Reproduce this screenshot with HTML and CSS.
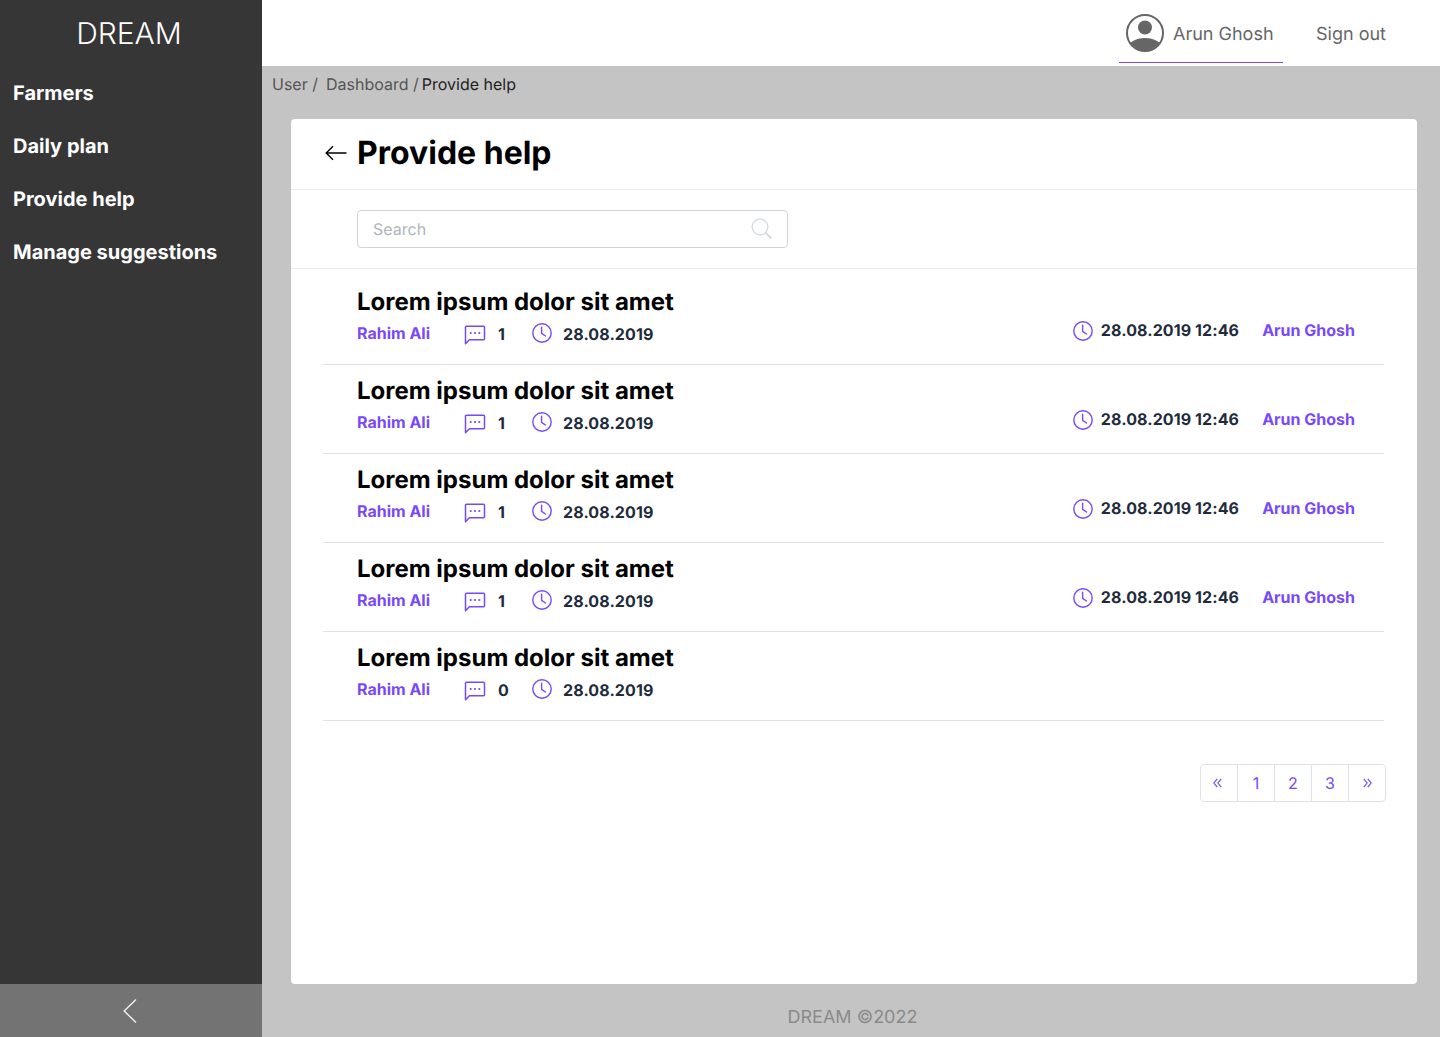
FILE: index.html
```html
<!DOCTYPE html>
<html lang="en">

<head>
  <meta charset="UTF-8">
  <meta name="viewport" content="width=device-width, initial-scale=1.0">
  <title>Provide help</title>
  <link rel="stylesheet" href="styles.css">
</head>

<body>
  <svg class="icon-defs" width="0" height="0">
    <symbol id="icon-chat" viewBox="0 0 22 20">
      <path d="M1.500 18.700V2.200a1 1 0 0 1 1-1h17a1 1 0 0 1 1 1v11.600a1 1 0 0 1-1 1H5.400z" fill="none" stroke="currentColor" stroke-width="1.500" stroke-linejoin="round" />
      <circle cx="6.700" cy="8" r="1.100" fill="currentColor" />
      <circle cx="11" cy="8" r="1.100" fill="currentColor" />
      <circle cx="15.300" cy="8" r="1.100" fill="currentColor" />
    </symbol>
    <symbol id="icon-clock" viewBox="0 0 20 20">
      <circle cx="10" cy="10" r="9.200" fill="none" stroke="currentColor" stroke-width="1.400" />
      <path d="M9.600 4.300v6l3.900 2.700" fill="none" stroke="currentColor" stroke-width="1.400" stroke-linecap="round" stroke-linejoin="round" />
    </symbol>
  </svg>

  <div class="layout">
    <aside class="sidebar">
      <div class="logo">DREAM</div>
      <nav class="side-nav">
        <a class="side-link">Farmers</a>
        <a class="side-link">Daily plan</a>
        <a class="side-link">Provide help</a>
        <a class="side-link">Manage suggestions</a>
      </nav>
      <div class="collapse">
        <svg width="16" height="26" viewBox="0 0 16 26">
          <path d="M14 1.500L2.200 13 14 24.500" fill="none" stroke="#f1f1f1" stroke-width="1.400" />
        </svg>
      </div>
    </aside>

    <div class="main">
      <header class="topbar">
        <div class="user">
          <svg class="avatar" width="38" height="38" viewBox="0 0 38 38">
            <defs>
              <clipPath id="avatar-clip">
                <circle cx="19" cy="19" r="17.500" />
              </clipPath>
            </defs>
            <circle cx="19" cy="19" r="18" fill="none" stroke="#666" stroke-width="2" />
            <circle cx="19" cy="13.500" r="7" fill="#666" />
            <ellipse cx="19" cy="34" rx="17" ry="10" fill="#666" clip-path="url(#avatar-clip)" />
          </svg>
          <span>Arun Ghosh</span>
        </div>
        <a class="signout">Sign out</a>
      </header>

      <div class="breadcrumb">
        <span>User /</span>
        <span class="crumb-mid">Dashboard /</span>
        <span class="crumb-current">Provide help</span>
      </div>

      <section class="card">
        <div class="card-head">
          <svg width="22" height="16" viewBox="0 0 22 16">
            <path d="M21.500 8H1.200M8 1.200L1.200 8 8 14.800" fill="none" stroke="#000" stroke-width="1.400" />
          </svg>
          <h1>Provide help</h1>
        </div>

        <div class="search-row">
          <div class="search">
            <span>Search</span>
            <svg width="22" height="22" viewBox="0 0 22 22">
              <circle cx="9" cy="9" r="7.900" fill="none" stroke="#d3d8e0" stroke-width="1.200" />
              <path d="M14.800 14.800L20.600 20.600" fill="none" stroke="#d3d8e0" stroke-width="1.800" />
            </svg>
          </div>
        </div>

        <div class="list">
          <div class="item">
            <div class="item-left">
              <h2>Lorem ipsum dolor sit amet</h2>
              <div class="meta">
                <a class="author">Rahim Ali</a>
                <svg class="chat"><use href="#icon-chat" /></svg>
                <span class="count">1</span>
                <svg class="clock"><use href="#icon-clock" /></svg>
                <span class="date">28.08.2019</span>
              </div>
            </div>
            <div class="item-right">
              <svg class="clock"><use href="#icon-clock" /></svg>
              <span class="date">28.08.2019 12:46</span>
              <a class="author">Arun Ghosh</a>
            </div>
          </div>

          <div class="item">
            <div class="item-left">
              <h2>Lorem ipsum dolor sit amet</h2>
              <div class="meta">
                <a class="author">Rahim Ali</a>
                <svg class="chat"><use href="#icon-chat" /></svg>
                <span class="count">1</span>
                <svg class="clock"><use href="#icon-clock" /></svg>
                <span class="date">28.08.2019</span>
              </div>
            </div>
            <div class="item-right">
              <svg class="clock"><use href="#icon-clock" /></svg>
              <span class="date">28.08.2019 12:46</span>
              <a class="author">Arun Ghosh</a>
            </div>
          </div>

          <div class="item">
            <div class="item-left">
              <h2>Lorem ipsum dolor sit amet</h2>
              <div class="meta">
                <a class="author">Rahim Ali</a>
                <svg class="chat"><use href="#icon-chat" /></svg>
                <span class="count">1</span>
                <svg class="clock"><use href="#icon-clock" /></svg>
                <span class="date">28.08.2019</span>
              </div>
            </div>
            <div class="item-right">
              <svg class="clock"><use href="#icon-clock" /></svg>
              <span class="date">28.08.2019 12:46</span>
              <a class="author">Arun Ghosh</a>
            </div>
          </div>

          <div class="item">
            <div class="item-left">
              <h2>Lorem ipsum dolor sit amet</h2>
              <div class="meta">
                <a class="author">Rahim Ali</a>
                <svg class="chat"><use href="#icon-chat" /></svg>
                <span class="count">1</span>
                <svg class="clock"><use href="#icon-clock" /></svg>
                <span class="date">28.08.2019</span>
              </div>
            </div>
            <div class="item-right">
              <svg class="clock"><use href="#icon-clock" /></svg>
              <span class="date">28.08.2019 12:46</span>
              <a class="author">Arun Ghosh</a>
            </div>
          </div>

          <div class="item">
            <div class="item-left">
              <h2>Lorem ipsum dolor sit amet</h2>
              <div class="meta">
                <a class="author">Rahim Ali</a>
                <svg class="chat"><use href="#icon-chat" /></svg>
                <span class="count">0</span>
                <svg class="clock"><use href="#icon-clock" /></svg>
                <span class="date">28.08.2019</span>
              </div>
            </div>
          </div>
        </div>

        <div class="pagination">
          <a class="page-link page-prev">
            <svg width="9" height="10" viewBox="0 0 9 10">
              <path d="M4.200 .8L.9 5l3.300 4.200M8.200 .8L4.900 5l3.300 4.200" fill="none" stroke="currentColor" stroke-width="1.200" />
            </svg>
          </a>
          <a class="page-link">1</a>
          <a class="page-link">2</a>
          <a class="page-link">3</a>
          <a class="page-link">
            <svg width="9" height="10" viewBox="0 0 9 10">
              <path d="M.8 .8L4.100 5 .8 9.200M4.800 .8L8.100 5 4.800 9.200" fill="none" stroke="currentColor" stroke-width="1.200" />
            </svg>
          </a>
        </div>
      </section>

      <footer class="footer">DREAM ©2022</footer>
    </div>
  </div>
</body>

</html>
```

FILE: styles.css
```css
* {
  box-sizing: border-box;
}

body {
  margin: 0;
  background-color: #c4c4c4;
  font-family: Inter, "Liberation Sans", sans-serif;
  color: #000;
  text-rendering: geometricPrecision;
}

.icon-defs {
  display: block;
  height: 0;
}

.layout {
  display: flex;
  height: 1037px;
  overflow: hidden;
}

/* Sidebar */
.sidebar {
  display: flex;
  flex-direction: column;
  width: 262px;
  flex-shrink: 0;
  background-color: #363636;
  color: white;
}

.logo {
  height: 66px;
  padding: 1px 4px 0 0;
  font-size: 30px;
  font-weight: 300;
  line-height: 66px;
  text-align: center;
}

.side-nav {
  display: flex;
  flex-direction: column;
  flex: 1;
}

.side-link {
  height: 53px;
  padding: 1px 0 0 13px;
  font-size: 20px;
  font-weight: 700;
  line-height: 53px;
}

.collapse {
  display: flex;
  align-items: center;
  justify-content: center;
  height: 53px;
  padding-right: 2px;
  background-color: #737373;
}

/* Main column */
.main {
  display: flex;
  flex-direction: column;
  flex: 1;
}

.topbar {
  display: flex;
  justify-content: flex-end;
  height: 66px;
  background-color: white;
  color: #666;
  font-size: 18px;
}

.user {
  display: flex;
  align-items: center;
  gap: 9px;
  width: 164px;
  height: 63px;
  padding: 4px 0 0 7px;
  border-bottom: 1px solid #7749f8;
}

.user span {
  margin-top: 3px;
}

.signout {
  width: 157px;
  padding: 24px 0 0 33px;
}

.breadcrumb {
  display: flex;
  height: 53px;
  padding: 8px 0 0 10px;
  color: #555;
  font-size: 16px;
  line-height: 21px;
}

.crumb-mid {
  margin-left: 8px;
}

.crumb-current {
  margin-left: 3px;
  color: #222;
}

.card {
  display: flex;
  flex-direction: column;
  height: 865px;
  margin: 0 23px 0 29px;
  background-color: white;
  border-radius: 4px;
}

.card-head {
  display: flex;
  align-items: center;
  gap: 10px;
  height: 71px;
  padding: 0 0 2px 34px;
  border-bottom: 1px solid #e9ecef;
}

h1 {
  margin: 0;
  font-size: 32px;
  font-weight: 700;
  line-height: 68px;
}

.search-row {
  height: 79px;
  padding: 20px 0 0 66px;
  border-bottom: 1px solid #e9ecef;
}

.search {
  display: flex;
  align-items: center;
  justify-content: space-between;
  width: 431px;
  height: 38px;
  padding: 0 14px 0 15px;
  border: 1px solid #ced4da;
  border-radius: 4px;
  color: #adb5bd;
  font-size: 16px;
}

.list {
  padding: 6px 33px 0 32px;
}

.item {
  display: flex;
  justify-content: space-between;
  height: 89px;
  padding: 8px 29px 0 34px;
  border-bottom: 1px solid #dee2e6;
}

.list .item:first-child {
  height: 90px;
  padding-top: 9px;
}

h2 {
  margin: 0;
  font-size: 24px;
  font-weight: 700;
  line-height: 36px;
}

.meta {
  display: flex;
  align-items: center;
  height: 26px;
}

.author {
  color: #7749f8;
  font-size: 16px;
  font-weight: 700;
}

.date,
.count {
  color: #212b3b;
  font-size: 16px;
  font-weight: 700;
  letter-spacing: 0.1px;
}

.chat {
  width: 22px;
  height: 20px;
  margin: 4px 0 0 34px;
  color: #7749f8;
}

.count {
  width: 34px;
  margin: 2px 0 0 12px;
}

.clock {
  width: 20px;
  height: 20px;
  color: #7749f8;
}

.meta .date {
  margin: 2px 0 0 11px;
}

.item-right {
  display: flex;
  align-items: center;
  height: 24px;
  margin-top: 34px;
}

.item-right .clock {
  margin-top: 2px;
}

.item-right .date {
  margin-left: 8px;
}

.item-right .author {
  margin-left: 23px;
}

.pagination {
  display: flex;
  align-self: flex-end;
  height: 38px;
  margin: 43px 31px 0 0;
  border: 1px solid #dee2e6;
  border-radius: 4px;
}

.page-link {
  display: flex;
  align-items: center;
  justify-content: center;
  width: 37px;
  color: #7749f8;
  font-size: 16px;
  border-right: 1px solid #dee2e6;
}

.page-prev {
  padding-right: 3px;
}

.page-link:last-child {
  width: 36px;
  border-right: none;
}

.footer {
  padding: 23px 0 0 3px;
  color: #8a8a8a;
  font-size: 18px;
  text-align: center;
}
```
